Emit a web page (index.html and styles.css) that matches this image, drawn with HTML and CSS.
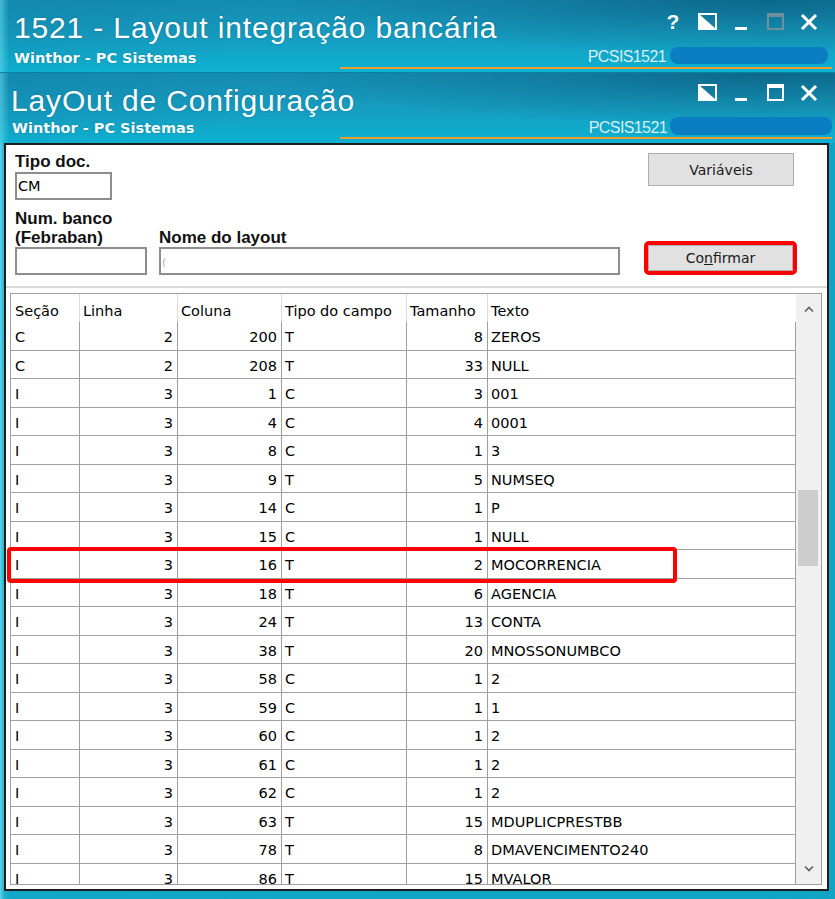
FILE: index.html
```html
<!DOCTYPE html>
<html lang="pt-BR">
<head>
<meta charset="utf-8">
<title>1521 - Layout integração bancária</title>
<link rel="stylesheet" href="styles.css">
</head>
<body>
<header class="tb tb1">
  <div class="tb-top">
    <h1 class="tb-title">1521 - Layout integração bancária</h1>
    <div class="ctrls">
      <span class="ctl help">?</span>
      <span class="ctl"><svg width="19" height="17" viewBox="0 0 19 17"><rect x="1" y="1" width="17" height="15" fill="none" stroke="#fff" stroke-width="2"/><path d="M1 16V1L18 16Z" fill="#fff"/></svg></span>
      <span class="ctl"><svg width="12" height="17" viewBox="0 0 12 17"><rect x="0" y="14" width="12" height="3" fill="#fff"/></svg></span>
      <span class="ctl"><svg width="17" height="17" viewBox="0 0 17 17"><rect x="1" y="1" width="15" height="15" fill="none" stroke="#6f8f9c" stroke-width="2"/><rect x="0" y="0" width="17" height="4" fill="#6f8f9c"/></svg></span>
      <span class="ctl"><svg width="18" height="16" viewBox="0 0 18 16"><path d="M2 1L16 15M16 1L2 15" stroke="#fff" stroke-width="3"/></svg></span>
    </div>
  </div>
  <div class="tb-sub">
    <span class="sub">Winthor - PC Sistemas</span>
    <span class="code">PCSIS1521</span>
    <span class="pill"></span>
  </div>
  <div class="orange"></div>
</header>

<header class="tb tb2">
  <div class="tb-top">
    <h1 class="tb-title">LayOut de Configuração</h1>
    <div class="ctrls">
      <span class="ctl"><svg width="19" height="17" viewBox="0 0 19 17"><rect x="1" y="1" width="17" height="15" fill="none" stroke="#fff" stroke-width="2"/><path d="M1 16V1L18 16Z" fill="#fff"/></svg></span>
      <span class="ctl"><svg width="12" height="17" viewBox="0 0 12 17"><rect x="0" y="14" width="12" height="3" fill="#fff"/></svg></span>
      <span class="ctl"><svg width="17" height="17" viewBox="0 0 17 17"><rect x="1" y="1" width="15" height="15" fill="none" stroke="#fff" stroke-width="2"/><rect x="0" y="0" width="17" height="4" fill="#fff"/></svg></span>
      <span class="ctl"><svg width="18" height="16" viewBox="0 0 18 16"><path d="M2 1L16 15M16 1L2 15" stroke="#fff" stroke-width="3"/></svg></span>
    </div>
  </div>
  <div class="tb-sub">
    <span class="sub">Winthor - PC Sistemas</span>
    <span class="code">PCSIS1521</span>
    <span class="pill"></span>
  </div>
  <div class="orange"></div>
</header>

<main class="panel">
  <div class="form">
    <div class="col-left">
      <div class="lbl">Tipo doc.</div>
      <div class="inp inp-tipo">CM</div>
      <div class="lbl f-num">Num. banco<br>(Febraban)</div>
      <div class="inp inp-num"></div>
    </div>
    <div class="col-mid">
      <div class="lbl">Nome do layout</div>
      <div class="inp inp-nome"><span class="caret">(</span></div>
    </div>
    <div class="col-right">
      <div class="btn btn-var">Variáveis</div>
      <div class="btn btn-conf">Co<u>n</u>firmar</div>
    </div>
  </div>
  <div class="sep"></div>

  <div class="grid">
    <div class="tbl">
      <div class="thead">
        <span class="c">Seção</span><span class="c">Linha</span><span class="c">Coluna</span><span class="c">Tipo do campo</span><span class="c">Tamanho</span><span class="c">Texto</span>
      </div>
      <div class="row"><span class="c">C</span><span class="c n">2</span><span class="c n">200</span><span class="c">T</span><span class="c n">8</span><span class="c">ZEROS</span></div>
      <div class="row"><span class="c">C</span><span class="c n">2</span><span class="c n">208</span><span class="c">T</span><span class="c n">33</span><span class="c">NULL</span></div>
      <div class="row"><span class="c">I</span><span class="c n">3</span><span class="c n">1</span><span class="c">C</span><span class="c n">3</span><span class="c">001</span></div>
      <div class="row"><span class="c">I</span><span class="c n">3</span><span class="c n">4</span><span class="c">C</span><span class="c n">4</span><span class="c">0001</span></div>
      <div class="row"><span class="c">I</span><span class="c n">3</span><span class="c n">8</span><span class="c">C</span><span class="c n">1</span><span class="c">3</span></div>
      <div class="row"><span class="c">I</span><span class="c n">3</span><span class="c n">9</span><span class="c">T</span><span class="c n">5</span><span class="c">NUMSEQ</span></div>
      <div class="row"><span class="c">I</span><span class="c n">3</span><span class="c n">14</span><span class="c">C</span><span class="c n">1</span><span class="c">P</span></div>
      <div class="row"><span class="c">I</span><span class="c n">3</span><span class="c n">15</span><span class="c">C</span><span class="c n">1</span><span class="c">NULL</span></div>
      <div class="row"><span class="c">I</span><span class="c n">3</span><span class="c n">16</span><span class="c">T</span><span class="c n">2</span><span class="c">MOCORRENCIA</span></div>
      <div class="row"><span class="c">I</span><span class="c n">3</span><span class="c n">18</span><span class="c">T</span><span class="c n">6</span><span class="c">AGENCIA</span></div>
      <div class="row"><span class="c">I</span><span class="c n">3</span><span class="c n">24</span><span class="c">T</span><span class="c n">13</span><span class="c">CONTA</span></div>
      <div class="row"><span class="c">I</span><span class="c n">3</span><span class="c n">38</span><span class="c">T</span><span class="c n">20</span><span class="c">MNOSSONUMBCO</span></div>
      <div class="row"><span class="c">I</span><span class="c n">3</span><span class="c n">58</span><span class="c">C</span><span class="c n">1</span><span class="c">2</span></div>
      <div class="row"><span class="c">I</span><span class="c n">3</span><span class="c n">59</span><span class="c">C</span><span class="c n">1</span><span class="c">1</span></div>
      <div class="row"><span class="c">I</span><span class="c n">3</span><span class="c n">60</span><span class="c">C</span><span class="c n">1</span><span class="c">2</span></div>
      <div class="row"><span class="c">I</span><span class="c n">3</span><span class="c n">61</span><span class="c">C</span><span class="c n">1</span><span class="c">2</span></div>
      <div class="row"><span class="c">I</span><span class="c n">3</span><span class="c n">62</span><span class="c">C</span><span class="c n">1</span><span class="c">2</span></div>
      <div class="row"><span class="c">I</span><span class="c n">3</span><span class="c n">63</span><span class="c">T</span><span class="c n">15</span><span class="c">MDUPLICPRESTBB</span></div>
      <div class="row"><span class="c">I</span><span class="c n">3</span><span class="c n">78</span><span class="c">T</span><span class="c n">8</span><span class="c">DMAVENCIMENTO240</span></div>
      <div class="row"><span class="c">I</span><span class="c n">3</span><span class="c n">86</span><span class="c">T</span><span class="c n">15</span><span class="c">MVALOR</span></div>
    </div>
    <div class="sb">
      <div class="sb-btn"><svg width="10" height="6" viewBox="0 0 10 6"><path d="M1 5.5L5 1.5L9 5.5" fill="none" stroke="#606060" stroke-width="1.6"/></svg></div>
      <div class="sb-track"><div class="thumb"></div></div>
      <div class="sb-btn"><svg width="10" height="6" viewBox="0 0 10 6"><path d="M1 0.5L5 4.5L9 0.5" fill="none" stroke="#606060" stroke-width="1.6"/></svg></div>
    </div>
    <div class="mark"></div>
  </div>
</main>
</body>
</html>
```

FILE: styles.css
```css
* { box-sizing: border-box; }
html, body { margin: 0; padding: 0; }
body {
  width: 835px;
  height: 899px;
  overflow: hidden;
  font-family: "DejaVu Sans", sans-serif;
  background:
    linear-gradient(90deg, #62d4ea 0px, #22b1d1 4px, #13a6c8 10px, #10a3c5 100%);
}

/* ---------- title bars ---------- */
.tb {
  color: #fff;
  background:
    linear-gradient(90deg, rgba(110, 225, 245, 0.55) 0px, rgba(110, 225, 245, 0) 9px),
    radial-gradient(60% 75% at 92% 0%, rgba(6, 78, 112, 0.62) 0%, rgba(6, 78, 112, 0.25) 55%, rgba(6, 78, 112, 0) 100%),
    linear-gradient(172deg, rgba(12, 118, 158, 0.35) 0%, rgba(12, 118, 158, 0) 45%),
    linear-gradient(180deg, #1791b6 0%, #169dc0 50%, #0db1d1 100%);
}
.tb1 { height: 72px; padding: 11px 0 0 14px; }
.tb2 { height: 71px; padding: 12px 0 0 11px; border-top: 1px solid #0b7fa4; }

.tb-top { display: flex; align-items: flex-start; height: 34px; }
.tb2 .tb-top { height: 32px; }

.tb-title {
  flex: 1;
  margin: 0;
  font: 400 30px/34px "Liberation Sans", Arial, sans-serif;
  letter-spacing: 0.85px;
  white-space: nowrap;
  text-shadow: 0 0 2px rgba(0, 60, 90, 0.35);
}
.tb2 .tb-title { line-height: 32px; }

.ctrls { display: flex; margin: 2px 9px 0 0; }
.tb2 .ctrls { margin-top: -1px; }
.ctl { width: 34px; height: 17px; display: flex; align-items: center; justify-content: center; }
.ctl svg { display: block; }
.help { font: 700 21px/17px "Liberation Sans", Arial, sans-serif; }

.tb-sub { display: flex; align-items: flex-start; height: 22px; }
.tb2 .tb-sub { height: 20px; }
.sub {
  flex: 1;
  margin: 4px 0 0 0;
  font: 700 14.5px/18px "DejaVu Sans", sans-serif;
  color: #f4fbfd;
  text-shadow: 0 0 2px rgba(0, 60, 90, 0.35);
}
.tb2 .sub { margin: 2px 0 0 1px; }
.code {
  margin-top: 3px;
  font: 400 16px/18px "Liberation Sans", Arial, sans-serif;
  letter-spacing: -0.6px;
  color: #d8eef5;
}
.tb2 .code { margin-top: 2px; }
.pill {
  width: 158px;
  height: 17px;
  margin: 2px 7px 0 4px;
  background: #0b7dc2;
  border-radius: 8px;
}
.tb2 .pill { width: 162px; height: 18px; margin: 0 3px 0 3px; }

.orange { height: 2px; margin: 0 3px 0 326px; background: #ee9d2a; }
.tb2 .orange { margin-left: 329px; }

/* ---------- panel ---------- */
.panel {
  margin-left: 4px;
  width: 825px;
  height: 748px;
  border: 2px solid #1d1d1d;
  background: #fff;
}

.form { display: flex; height: 141px; padding: 7px 0 11px 9px; }
.col-left { width: 132px; display: flex; flex-direction: column; }
.col-mid { width: 461px; margin-left: 12px; display: flex; flex-direction: column; justify-content: flex-end; }
.col-right {
  width: 146px;
  margin-left: 28px;
  padding: 1px 0 4px;
  display: flex;
  flex-direction: column;
  justify-content: space-between;
  align-items: flex-start;
}

.lbl { font: 700 17px/19px "Liberation Sans", Arial, sans-serif; color: #111; white-space: nowrap; }
.f-num { margin-top: 9px; }

.inp {
  height: 28px;
  border: 2px solid #8d8d8d;
  background: #fff;
  padding-left: 1px;
  font: 400 14.5px/24px "DejaVu Sans", sans-serif;
  color: #000;
}
.inp-tipo { width: 97px; margin-top: 1px; }
.inp-num { width: 132px; }
.inp-nome { width: 461px; }
.caret { color: #b0b0b0; font-size: 11px; }

.btn {
  display: flex;
  align-items: center;
  justify-content: center;
  background: #e1e1e1;
  border: 1px solid #adadad;
  font: 400 14px "DejaVu Sans", sans-serif;
  color: #1a1a1a;
}
.btn-var { width: 146px; height: 33px; }
.btn-conf { width: 145px; height: 26px; outline: 4px solid #ff0000; outline-offset: 0; border-radius: 1px; }

.sep { height: 2px; background: #dadada; }

/* ---------- grid ---------- */
.grid {
  position: relative;
  display: flex;
  height: 592px;
  margin: 5px 5px 0 4px;
  border: 1px solid #a0a0a0;
}
.tbl { width: 785px; overflow: hidden; }
.thead, .row {
  display: grid;
  grid-template-columns: 69px 98px 104px 125px 81px 308px;
}
.thead { height: 28px; }
.row { height: 28.5px; border-bottom: 1px solid #a0a0a0; }

.c {
  padding: 3px 4px 0 3px;
  font-size: 14.5px;
  line-height: 25px;
  color: #000;
  white-space: nowrap;
  overflow: hidden;
}
.c:first-child { padding-left: 4px; }
.thead .c { padding-top: 5px; border-right: 1px solid #dcdcdc; }
.thead .c:last-child { border-right: 0; }
.row .c { border-right: 1px solid #a0a0a0; }
.n { text-align: right; }

.sb { width: 25px; background: #f0f0f0; display: flex; flex-direction: column; }
.sb-btn { height: 30px; display: flex; align-items: center; justify-content: center; }
.sb-btn svg { display: block; }
.sb-track { flex: 1; }
.thumb { width: 20px; height: 76px; margin: 166px 0 0 2px; background: #cdcdcd; }

.mark {
  position: absolute;
  left: -4px;
  top: 253px;
  width: 670px;
  height: 36px;
  border: 4px solid #ff0000;
  border-radius: 4px;
}
```
